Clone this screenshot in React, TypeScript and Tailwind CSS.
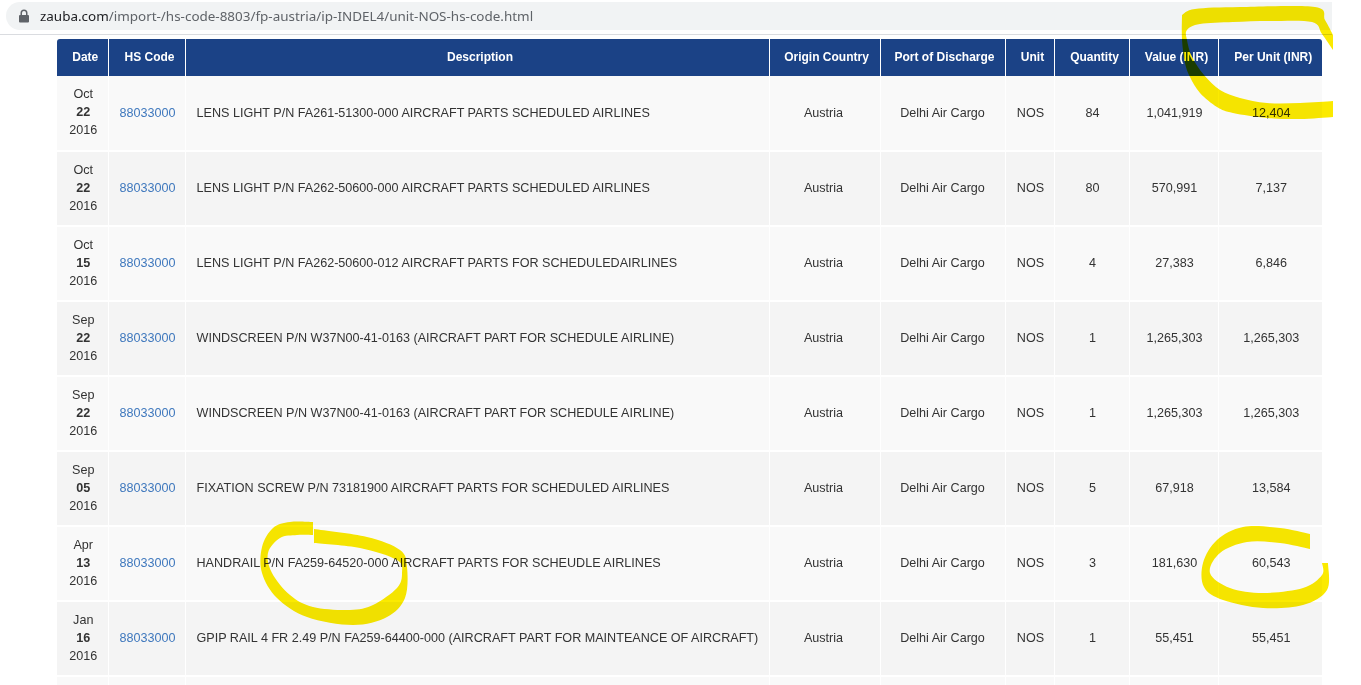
type Pt = [number, number]

const rows = [
  { m: 'Oct', d: '22', y: '2016', desc: 'LENS LIGHT P/N FA261-51300-000 AIRCRAFT PARTS SCHEDULED AIRLINES', qty: '84', value: '1,041,919', unit: '12,404' },
  { m: 'Oct', d: '22', y: '2016', desc: 'LENS LIGHT P/N FA262-50600-000 AIRCRAFT PARTS SCHEDULED AIRLINES', qty: '80', value: '570,991', unit: '7,137' },
  { m: 'Oct', d: '15', y: '2016', desc: 'LENS LIGHT P/N FA262-50600-012 AIRCRAFT PARTS FOR SCHEDULEDAIRLINES', qty: '4', value: '27,383', unit: '6,846' },
  { m: 'Sep', d: '22', y: '2016', desc: 'WINDSCREEN P/N W37N00-41-0163 (AIRCRAFT PART FOR SCHEDULE AIRLINE)', qty: '1', value: '1,265,303', unit: '1,265,303' },
  { m: 'Sep', d: '22', y: '2016', desc: 'WINDSCREEN P/N W37N00-41-0163 (AIRCRAFT PART FOR SCHEDULE AIRLINE)', qty: '1', value: '1,265,303', unit: '1,265,303' },
  { m: 'Sep', d: '05', y: '2016', desc: 'FIXATION SCREW P/N 73181900 AIRCRAFT PARTS FOR SCHEDULED AIRLINES', qty: '5', value: '67,918', unit: '13,584' },
  { m: 'Apr', d: '13', y: '2016', desc: 'HANDRAIL P/N FA259-64520-000 AIRCRAFT PARTS FOR SCHEUDLE AIRLINES', qty: '3', value: '181,630', unit: '60,543' },
  { m: 'Jan', d: '16', y: '2016', desc: 'GPIP RAIL 4 FR 2.49 P/N FA259-64400-000 (AIRCRAFT PART FOR MAINTEANCE OF AIRCRAFT)', qty: '1', value: '55,451', unit: '55,451' },
]

// catmull-rom through the marker points, each section's ends stay sharp
function smooth(pts: Pt[], start: 'M' | 'L') {
  let d = `${start}${pts[0][0]} ${pts[0][1]}`
  for (let i = 0; i < pts.length - 1; i++) {
    const p0 = pts[Math.max(i - 1, 0)]
    const p1 = pts[i]
    const p2 = pts[i + 1]
    const p3 = pts[Math.min(i + 2, pts.length - 1)]
    const c1x = p1[0] + (p2[0] - p0[0]) / 6
    const c1y = p1[1] + (p2[1] - p0[1]) / 6
    const c2x = p2[0] - (p3[0] - p1[0]) / 6
    const c2y = p2[1] - (p3[1] - p1[1]) / 6
    d += ` C${c1x} ${c1y} ${c2x} ${c2y} ${p2[0]} ${p2[1]}`
  }
  return d
}

function marker(...sections: Pt[][]) {
  return sections.map((s, i) => smooth(s, i === 0 ? 'M' : 'L')).join(' ') + ' Z'
}

const topRight = marker(
  [[1182, 15], [1195, 9], [1240, 7], [1315, 7], [1325, 20], [1333, 35]],
  [[1333, 50], [1322, 34], [1312, 22], [1270, 21], [1233, 22], [1200, 24], [1187, 30], [1187, 40], [1192, 57], [1204, 75], [1220, 90], [1240, 98], [1267, 103], [1300, 103], [1333, 101]],
  [[1333, 117], [1300, 119], [1267, 118], [1233, 113], [1217, 107], [1200, 93], [1190, 77], [1185, 63], [1182, 40], [1182, 15]],
)

const middle = marker(
  [[313, 522], [290, 522], [273, 528], [262, 547], [262, 573], [277, 598], [307, 617], [353, 625], [387, 617], [405, 598], [407, 567], [400, 550], [367, 537], [314, 529]],
  [[314, 543], [360, 548], [397, 560], [402, 573], [397, 588], [373, 605], [350, 610], [313, 607], [290, 595], [272, 573], [268, 553], [280, 538], [297, 535], [313, 535]],
)

const lower = marker(
  [[1310, 534], [1280, 528], [1243, 527], [1217, 540], [1203, 563], [1204, 587], [1223, 600], [1263, 608], [1303, 605], [1327, 590], [1328, 563]],
  [[1322, 563], [1322, 575], [1303, 588], [1263, 593], [1230, 588], [1210, 573], [1220, 553], [1247, 542], [1280, 543], [1310, 549]],
)

const th = 'border-r border-white text-center font-bold pl-[6px] pb-[2px] whitespace-nowrap'
const td = 'border-r border-b-2 border-white text-center align-middle'

function App() {
  return (
    <div className="relative w-[1361px] h-[685px] overflow-hidden bg-white font-['Liberation_Sans',Arial,sans-serif]">
      <div className="w-[1332px] h-[35px] pt-[2px] border-b border-[#dadce0]">
        <div className="flex items-center h-[28px] ml-[6px] bg-[#f1f3f4] rounded-l-[14px]">
          <svg className="ml-[10px] w-[16px] h-[16px]" viewBox="0 0 16 16" fill="#5f6368">
            <path d="M4.5 7V5a3.5 3.5 0 0 1 7 0v2h.5a1 1 0 0 1 1 1v5.5a1 1 0 0 1-1 1H4a1 1 0 0 1-1-1V8a1 1 0 0 1 1-1h.5zM6 7h4V5a2 2 0 0 0-4 0v2z" />
          </svg>
          <span className="ml-[8px] text-[13.45px] text-[#5f6368] font-['Noto_Sans',sans-serif]">
            <span className="text-[#202124]">zauba.com</span>/import-/hs-code-8803/fp-austria/ip-INDEL4/unit-NOS-hs-code.html
          </span>
        </div>
      </div>

      <div className="ml-[57px] mt-[4px] w-[1265px]">
        <table className="w-full table-fixed border-collapse text-[12.6px] text-[#333]">
          <colgroup>
            <col className="w-[51px]" />
            <col className="w-[77px]" />
            <col className="w-[584px]" />
            <col className="w-[111px]" />
            <col className="w-[125px]" />
            <col className="w-[49px]" />
            <col className="w-[75px]" />
            <col className="w-[89px]" />
            <col className="w-[104px]" />
          </colgroup>
          <thead>
            <tr className="h-[37px] bg-[#1b4286] text-white text-[12px]">
              <th className={th + ' rounded-tl-[3px]'}>Date</th>
              <th className={th}>HS Code</th>
              <th className={th}>Description</th>
              <th className="border-r border-white text-center font-bold pl-1 pb-[2px] whitespace-nowrap">Origin Country</th>
              <th className="border-r border-white text-center font-bold pl-1 pb-[2px] whitespace-nowrap">Port of Discharge</th>
              <th className={th}>Unit</th>
              <th className={th}>Quantity</th>
              <th className={th}>Value (INR)</th>
              <th className="text-center font-bold pl-[6px] pb-[2px] whitespace-nowrap rounded-tr-[3px]">Per Unit (INR)</th>
            </tr>
          </thead>
          <tbody>
            {rows.map((r, i) => (
              <tr key={i} className={i % 2 === 0 ? 'h-[75px] bg-[#f9f9f9]' : 'h-[75px] bg-[#f4f4f4]'}>
                <td className={td + ' pl-[2px] pb-[2px] leading-[18px]'}>
                  <div>{r.m}</div>
                  <div className="font-bold">{r.d}</div>
                  <div>{r.y}</div>
                </td>
                <td className={td + ' pl-[2px] text-[#3f78bd]'}>88033000</td>
                <td className={td + ' text-left pl-[11px] whitespace-nowrap'}>{r.desc}</td>
                <td className={td + ' pr-[2px]'}>Austria</td>
                <td className={td}>Delhi Air Cargo</td>
                <td className={td + ' pl-[2px]'}>NOS</td>
                <td className={td + ' pl-[2px]'}>{r.qty}</td>
                <td className={td + ' pl-[2px]'}>{r.value}</td>
                <td className="border-b-2 border-white text-center align-middle pl-[2px]">{r.unit}</td>
              </tr>
            ))}
            <tr className="h-[75px] bg-[#f9f9f9]">
              {Array.from({ length: 9 }, (_, i) => (
                <td key={i} className={td} />
              ))}
            </tr>
          </tbody>
        </table>
      </div>

      {/* highlighter scribbles on top of the screenshot */}
      <svg className="absolute left-0 top-0 w-[1361px] h-[685px] pointer-events-none mix-blend-multiply" viewBox="0 0 1361 685" fill="#fbea00">
        <path d={topRight} />
        <path d={middle} />
        <path d={lower} />
      </svg>
    </div>
  )
}

export default App
